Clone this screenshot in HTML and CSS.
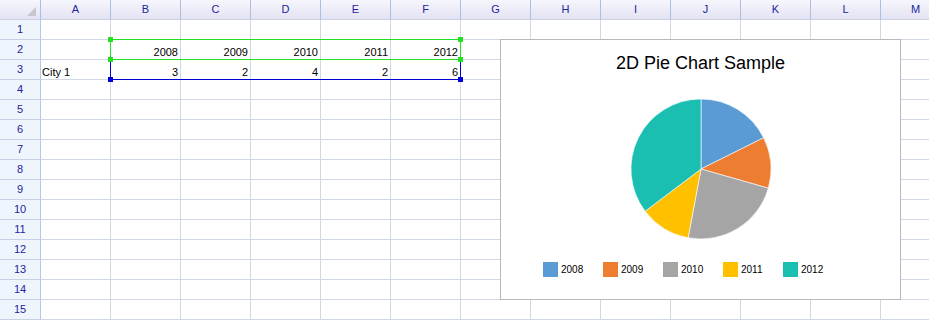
FILE: index.html
```html
<!DOCTYPE html>
<html>
<head>
<meta http-equiv="Content-Type" content="text/html; charset=utf-8"/>
<title>2D Pie Chart Sample</title>
<link rel="stylesheet" href="styles.css">
</head>
<body>
<div class="sheet">

<div class="row head">
<div class="corner"><span class="tri"></span></div>
<div class="col">A</div><div class="col">B</div><div class="col">C</div><div class="col">D</div><div class="col">E</div><div class="col">F</div><div class="col">G</div><div class="col">H</div><div class="col">I</div><div class="col">J</div><div class="col">K</div><div class="col">L</div><div class="col">M</div>
</div>

<div class="row"><div class="num">1</div><div class="c"></div><div class="c"></div><div class="c"></div><div class="c"></div><div class="c"></div><div class="c"></div><div class="c"></div><div class="c"></div><div class="c"></div><div class="c"></div><div class="c"></div><div class="c"></div><div class="c"></div></div>
<div class="row"><div class="num">2</div><div class="c"></div><div class="c n">2008</div><div class="c n">2009</div><div class="c n">2010</div><div class="c n">2011</div><div class="c n">2012</div><div class="c"></div><div class="c"></div><div class="c"></div><div class="c"></div><div class="c"></div><div class="c"></div><div class="c"></div></div>
<div class="row"><div class="num">3</div><div class="c">City 1</div><div class="c n">3</div><div class="c n">2</div><div class="c n">4</div><div class="c n">2</div><div class="c n">6</div><div class="c"></div><div class="c"></div><div class="c"></div><div class="c"></div><div class="c"></div><div class="c"></div><div class="c"></div></div>
<div class="row"><div class="num">4</div><div class="c"></div><div class="c"></div><div class="c"></div><div class="c"></div><div class="c"></div><div class="c"></div><div class="c"></div><div class="c"></div><div class="c"></div><div class="c"></div><div class="c"></div><div class="c"></div><div class="c"></div></div>
<div class="row"><div class="num">5</div><div class="c"></div><div class="c"></div><div class="c"></div><div class="c"></div><div class="c"></div><div class="c"></div><div class="c"></div><div class="c"></div><div class="c"></div><div class="c"></div><div class="c"></div><div class="c"></div><div class="c"></div></div>
<div class="row"><div class="num">6</div><div class="c"></div><div class="c"></div><div class="c"></div><div class="c"></div><div class="c"></div><div class="c"></div><div class="c"></div><div class="c"></div><div class="c"></div><div class="c"></div><div class="c"></div><div class="c"></div><div class="c"></div></div>
<div class="row"><div class="num">7</div><div class="c"></div><div class="c"></div><div class="c"></div><div class="c"></div><div class="c"></div><div class="c"></div><div class="c"></div><div class="c"></div><div class="c"></div><div class="c"></div><div class="c"></div><div class="c"></div><div class="c"></div></div>
<div class="row"><div class="num">8</div><div class="c"></div><div class="c"></div><div class="c"></div><div class="c"></div><div class="c"></div><div class="c"></div><div class="c"></div><div class="c"></div><div class="c"></div><div class="c"></div><div class="c"></div><div class="c"></div><div class="c"></div></div>
<div class="row"><div class="num">9</div><div class="c"></div><div class="c"></div><div class="c"></div><div class="c"></div><div class="c"></div><div class="c"></div><div class="c"></div><div class="c"></div><div class="c"></div><div class="c"></div><div class="c"></div><div class="c"></div><div class="c"></div></div>
<div class="row"><div class="num">10</div><div class="c"></div><div class="c"></div><div class="c"></div><div class="c"></div><div class="c"></div><div class="c"></div><div class="c"></div><div class="c"></div><div class="c"></div><div class="c"></div><div class="c"></div><div class="c"></div><div class="c"></div></div>
<div class="row"><div class="num">11</div><div class="c"></div><div class="c"></div><div class="c"></div><div class="c"></div><div class="c"></div><div class="c"></div><div class="c"></div><div class="c"></div><div class="c"></div><div class="c"></div><div class="c"></div><div class="c"></div><div class="c"></div></div>
<div class="row"><div class="num">12</div><div class="c"></div><div class="c"></div><div class="c"></div><div class="c"></div><div class="c"></div><div class="c"></div><div class="c"></div><div class="c"></div><div class="c"></div><div class="c"></div><div class="c"></div><div class="c"></div><div class="c"></div></div>
<div class="row"><div class="num">13</div><div class="c"></div><div class="c"></div><div class="c"></div><div class="c"></div><div class="c"></div><div class="c"></div><div class="c"></div><div class="c"></div><div class="c"></div><div class="c"></div><div class="c"></div><div class="c"></div><div class="c"></div></div>
<div class="row"><div class="num">14</div><div class="c"></div><div class="c"></div><div class="c"></div><div class="c"></div><div class="c"></div><div class="c"></div><div class="c"></div><div class="c"></div><div class="c"></div><div class="c"></div><div class="c"></div><div class="c"></div><div class="c"></div></div>
<div class="row"><div class="num">15</div><div class="c"></div><div class="c"></div><div class="c"></div><div class="c"></div><div class="c"></div><div class="c"></div><div class="c"></div><div class="c"></div><div class="c"></div><div class="c"></div><div class="c"></div><div class="c"></div><div class="c"></div></div>

<!-- selection of B2:F3 -->
<div class="sel sel-blue"></div>
<div class="sel sel-green"></div>
<span class="handle green" style="left:108px;top:37px"></span>
<span class="handle green" style="left:458px;top:37px"></span>
<span class="handle green" style="left:108px;top:57px"></span>
<span class="handle green" style="left:458px;top:57px"></span>
<span class="handle blue" style="left:108px;top:77px"></span>
<span class="handle blue" style="left:458px;top:77px"></span>

<!-- floating chart -->
<div class="chart">
  <div class="chart-title">2D Pie Chart Sample</div>
  <svg class="pie" width="399" height="186" viewBox="0 0 399 186">
    <g stroke="#ffffff" stroke-width="0.6">
      <path fill="#5b9bd5" d="M200 96 L200 26 A70 70 0 0 1 262.66 64.8 Z"/>
      <path fill="#ed7d31" d="M200 96 L262.66 64.8 A70 70 0 0 1 267.33 115.16 Z"/>
      <path fill="#a5a5a5" d="M200 96 L267.33 115.16 A70 70 0 0 1 187.13 164.81 Z"/>
      <path fill="#ffc000" d="M200 96 L187.13 164.81 A70 70 0 0 1 144.14 138.18 Z"/>
      <path fill="#1abfb2" d="M200 96 L144.14 138.18 A70 70 0 0 1 200 26 Z"/>
    </g>
  </svg>
  <div class="legend">
    <div class="item"><span class="sw" style="background:#5b9bd5"></span>2008</div>
    <div class="item"><span class="sw" style="background:#ed7d31"></span>2009</div>
    <div class="item"><span class="sw" style="background:#a5a5a5"></span>2010</div>
    <div class="item"><span class="sw" style="background:#ffc000"></span>2011</div>
    <div class="item"><span class="sw" style="background:#1abfb2"></span>2012</div>
  </div>
</div>

</div>
</body>
</html>
```

FILE: styles.css
```css
body {
   margin: 0;
   background-color: white;
   font-family: "Liberation Sans", Arial, sans-serif;
   font-size: 11px;
   overflow: hidden;
}

.sheet {
   position: relative;
   width: 929px;
   height: 320px;
   overflow: hidden;
}

.row {
   display: flex;
   height: 20px;
}

.row > div {
   flex: none;
   box-sizing: border-box;
   height: 20px;
}

/* headers */
.corner, .col {
   background: linear-gradient(#f6f6fd, #e3e3f4);
   border-bottom: 1px solid #c8d1e4;
   border-right: 1px solid #a9c1e0;
}

.corner {
   width: 41px;
   display: flex;
   justify-content: flex-end;
   align-items: flex-end;
   padding: 0 4px 3px 0;
}

.tri {
   width: 0;
   height: 0;
   border-left: 9px solid transparent;
   border-bottom: 9px solid #c6c6cf;
}

.col {
   width: 70px;
   text-align: center;
   line-height: 19px;
   color: #24249c;
}

.num {
   width: 41px;
   background-color: #eef5fd;
   border-right: 1px solid #b6c7e0;
   border-bottom: 1px solid #c8d1e4;
   text-align: center;
   line-height: 19px;
   color: #24249c;
}

/* cells */
.c {
   width: 70px;
   border-right: 1px solid #d0d7e5;
   border-bottom: 1px solid #d0d7e5;
   padding: 6px 1px 0 1px;
   line-height: 13px;
   white-space: nowrap;
   color: #000;
}

.c.n {
   text-align: right;
   padding-right: 2px;
}

/* selection */
.sel {
   position: absolute;
   left: 110px;
   width: 351px;
   height: 21px;
   box-sizing: border-box;
}

.sel-green {
   top: 39px;
   border: 1px solid #22e022;
}

.sel-blue {
   top: 59px;
   border: 1px solid #0000d2;
}

.handle {
   position: absolute;
   width: 5px;
   height: 5px;
}

.handle.green { background-color: #22e022; }
.handle.blue { background-color: #0000d2; }

/* chart */
.chart {
   position: absolute;
   left: 500px;
   top: 39px;
   width: 401px;
   height: 261px;
   box-sizing: border-box;
   border: 1px solid #b8b8b8;
   background-color: white;
   padding-top: 13px;
}

.chart-title {
   text-align: center;
   font-size: 18px;
   line-height: 20px;
   color: #000;
}

.pie {
   display: block;
}

.legend {
   display: flex;
   align-items: center;
   height: 21px;
   padding-left: 42px;
}

.item {
   width: 60px;
   display: flex;
   align-items: center;
   gap: 3px;
   font-size: 10px;
   color: #000;
}

.sw {
   width: 15px;
   height: 15px;
}
```
